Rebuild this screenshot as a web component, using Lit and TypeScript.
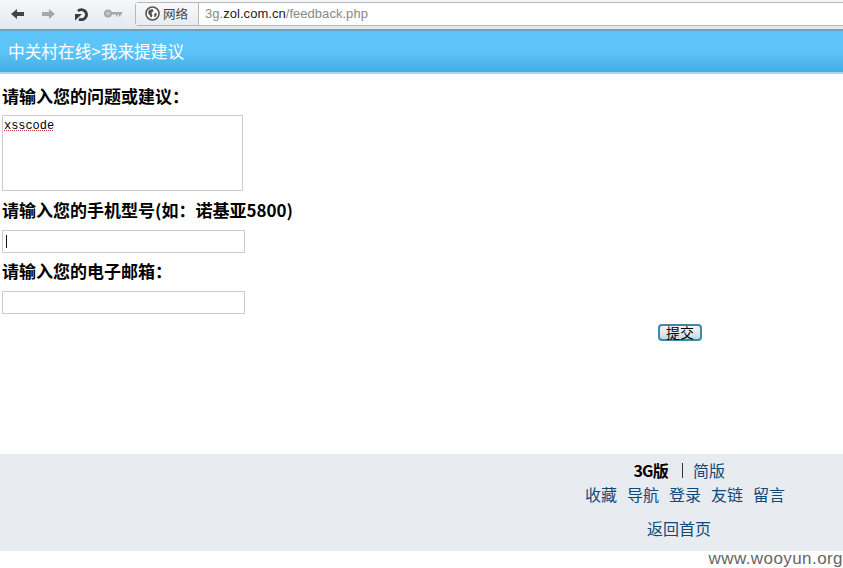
import { LitElement, html, css } from "lit";
import { customElement } from "lit/decorators.js";

@customElement("app-root")
export class AppRoot extends LitElement {
  static styles = css`
    :host { display: block; width: 843px; height: 568px; overflow: hidden; background: #fff; font-family: "Noto Sans CJK SC", "Liberation Sans", sans-serif; color: #000; }
    .toolbar { height: 29px; box-sizing: border-box; display: flex; align-items: flex-start; padding-top: 2px; background: linear-gradient(#f6f7f9, #e3e8f0); }
    .nav { display: flex; align-items: flex-start; width: 135px; flex: none; padding-top: 7px; }
    .nav svg { display: block; flex: none; }
    .i1 { margin-left: 11px; }
    .i2 { margin-left: 18px; }
    .i3 { margin-left: 20px; margin-top: -1px; }
    .i4 { margin-left: 15px; }
    .addr { flex: 1; height: 24px; box-sizing: border-box; display: flex; align-items: stretch; border: 1px solid #b4b8bd; border-right: none; border-radius: 4px 0 0 4px; background: #fff; }
    .sec { width: 63px; flex: none; display: flex; align-items: center; gap: 3px; padding: 0 0 1px 9px; box-sizing: border-box; background: linear-gradient(#f9f9fa, #e9ebef); border-right: 1px solid #b4b8bd; font-size: 12.5px; color: #444; }
    .url { padding-left: 6px; font: 13px/21px "Liberation Sans", sans-serif; letter-spacing: .04px; color: #888; }
    .url b { font-weight: 400; color: #222; }
    .banner { height: 45px; box-sizing: border-box; border-top: 2px solid #6aa3c4; border-bottom: 2px solid #a6d6f2; background: linear-gradient(#5cc4f9 0%, #5cc4f9 50%, #43ace2 100%); color: #fff; font-size: 16.7px; line-height: 41px; padding-left: 8px; }
    .main { padding: 13px 0 0 2px; height: 380px; box-sizing: border-box; display: flex; flex-direction: column; align-items: flex-start; }
    .label { font-size: 17px; font-weight: 700; line-height: 20px; white-space: nowrap; margin-top: -1px; }
    .ta { width: 241px; height: 76px; box-sizing: border-box; border: 1px solid #ccc; margin-top: 9px; padding: 2px 1px; font: 12px/16px "Liberation Mono", monospace; letter-spacing: -.05px; }
    .ta span { text-decoration: underline dotted #c33; }
    .inp { width: 243px; height: 23px; box-sizing: border-box; border: 1px solid #ccc; margin-top: 10px; padding: 4px 0 0 3px; }
    .caret { display: block; width: 1px; height: 13px; background: #111; }
    .l2 { margin-top: 9px; }
    .l3 { margin-top: 8px; }
    .btnrow { align-self: stretch; margin-top: 10px; padding-left: 656px; }
    .btn { display: block; width: 44px; height: 17px; box-sizing: border-box; padding: 0; border: 2px solid #3f8aa8; border-radius: 4px; background: linear-gradient(#f3f5f6 0%, #e2e8ea 55%, #b9dbe8 100%); font: 14px/13px "Noto Sans CJK SC", sans-serif; color: #000; text-align: center; }
    .footer { height: 97px; box-sizing: border-box; background: #e8ebef; padding: 4px 0 0 517px; width: 843px; }
    .col { width: 326px; display: flex; flex-direction: column; align-items: center; font-size: 16px; line-height: 24px; color: #0f4a7a; }
    .r1 { display: flex; align-items: center; margin-left: -1.6px; }
    .r1 b { color: #000; font-weight: 700; letter-spacing: -.8px; }
    .sep { width: 1px; height: 15px; background: #333; margin: 0 10px 0 14px; }
    .r2 { display: flex; gap: 10px; margin-left: 10px; white-space: nowrap; }
    .r3 { margin-top: 10px; margin-left: -2px; }
    .mark { text-align: right; font: 17px/16px "Liberation Sans", sans-serif; color: #666; letter-spacing: .43px; }
  `;

  render() {
    return html`
      <div class="toolbar">
        <div class="nav">
          <svg class="i1" width="13" height="10" viewBox="0 0 13 10"><path d="M0 5 L6 0 V3 H13 V7 H6 V10 Z" fill="#444"/></svg>
          <svg class="i2" width="13" height="10" viewBox="0 0 13 10"><path d="M13 5 L7 0 V3 H0 V7 H7 V10 Z" fill="#a4a8ad"/></svg>
          <svg class="i3" width="14" height="13" viewBox="0 0 14 13"><path d="M3 3 A5 5 0 1 1 4 11" fill="none" stroke="#3c3c3c" stroke-width="3"/><path d="M0 6 L7 6 L0 12.5 Z" fill="#3c3c3c"/></svg>
          <svg class="i4" width="18" height="9" viewBox="0 0 18 9"><circle cx="4" cy="4.5" r="3" fill="#c4c6c9" stroke="#a4a7ab" stroke-width="2"/><path d="M7 3 H18 V5.5 H16.5 V7.5 H15 V5.5 H13.5 V7.5 H12 V5.5 H7 Z" fill="#a4a7ab"/></svg>
        </div>
        <div class="addr">
          <div class="sec">
            <svg width="15" height="15" viewBox="0 0 15 15"><circle cx="7.5" cy="7.5" r="6.5" fill="#fff" stroke="#555" stroke-width="1.6"/><path d="M4 4 L7.5 3 L8.5 5 L6.5 7 L7.5 9.5 L6 12 L4.5 9 L3 7 Z M9.5 7 L12 7.5 L11 10.5 L9 11 Z" fill="#555"/></svg>
            <span>网络</span>
          </div>
          <div class="url">3g.<b>zol.com.cn</b>/feedback.php</div>
        </div>
      </div>
      <div class="banner">中关村在线&gt;我来提建议</div>
      <div class="main">
        <div class="label">请输入您的问题或建议：</div>
        <div class="ta"><span>xsscode</span></div>
        <div class="label l2">请输入您的手机型号(如：诺基亚5800)</div>
        <div class="inp"><span class="caret"></span></div>
        <div class="label l3">请输入您的电子邮箱：</div>
        <div class="inp"></div>
        <div class="btnrow"><button class="btn">提交</button></div>
      </div>
      <div class="footer">
        <div class="col">
          <div class="r1"><b>3G版</b><span class="sep"></span><span>简版</span></div>
          <div class="r2"><span>收藏</span><span>导航</span><span>登录</span><span>友链</span><span>留言</span></div>
          <div class="r3">返回首页</div>
        </div>
      </div>
      <div class="mark">www.wooyun.org</div>
    `;
  }
}
